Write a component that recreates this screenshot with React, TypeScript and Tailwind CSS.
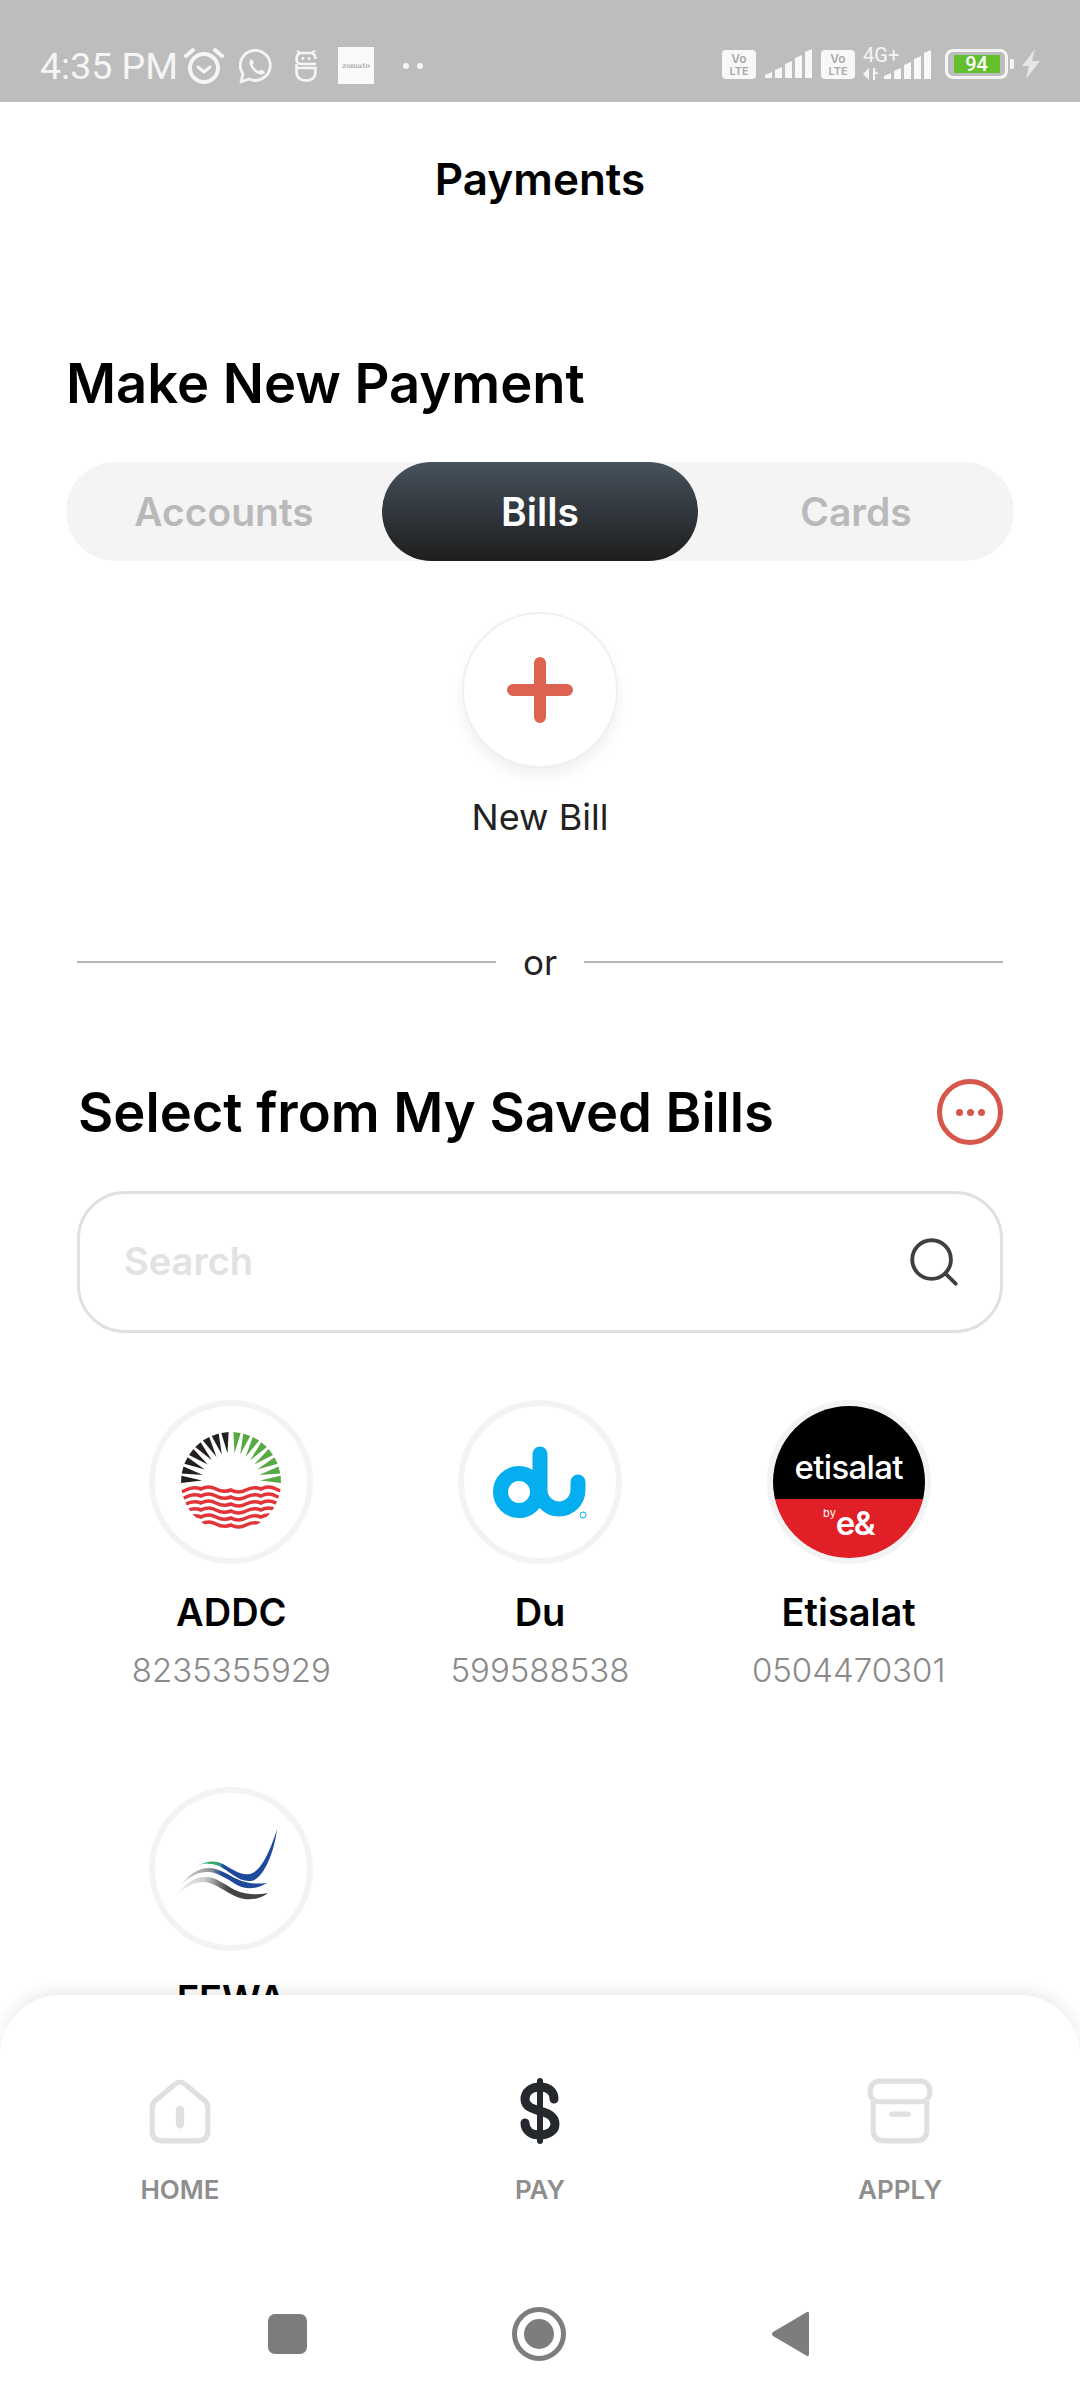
import { Search } from 'lucide-react';

const sans = 'font-["Inter","Liberation_Sans",sans-serif]';

const rayAngles = [3, 14, 25.5, 37, 48.5, 60, 71.5, 83];
const barHeights = [7, 12, 18, 24, 30];

function wedge(deg: number) {
  const pt = (a: number, r: number) => {
    const t = (a * Math.PI) / 180;
    return `${(50 + r * Math.cos(t)).toFixed(1)},${(50 - r * Math.sin(t)).toFixed(1)}`;
  };
  return `${pt(deg, 29)} ${pt(deg - 4.2, 50)} ${pt(deg + 4.2, 50)}`;
}

function AddcLogo() {
  const waves = [58, 65, 72, 79, 86, 93];
  return (
    <svg width="100" height="100" viewBox="0 0 100 100">
      <defs>
        <clipPath id="addc-clip">
          <circle cx="50" cy="50" r="50" />
        </clipPath>
      </defs>
      {rayAngles.map((a) => (
        <polygon key={a} points={wedge(a)} fill="#58a845" />
      ))}
      {rayAngles.map((a) => (
        <polygon key={a} points={wedge(180 - a)} fill="#231f20" />
      ))}
      <g clipPath="url(#addc-clip)" fill="none" stroke="#e2353a" strokeWidth="3.6">
        {waves.map((y) => (
          <path
            key={y}
            d={`M-10 ${y} q7.5 4 15 0 t15 -1 q7.5 -4 15 0 t15 1 q7.5 4 15 0 t15 -1 q7.5 -4 15 0 t15 1`}
          />
        ))}
      </g>
    </svg>
  );
}

function DuLogo() {
  return (
    <svg width="120" height="120" viewBox="0 0 120 120">
      <g fill="none" stroke="#05aeef" strokeWidth="15" strokeLinecap="round">
        <circle cx="39" cy="70" r="18.5" />
        <path d="M60 32 V68 a19 19 0 0 0 38 0 V60" />
      </g>
      <circle cx="103" cy="93" r="3" fill="none" stroke="#05aeef" strokeWidth="1" />
    </svg>
  );
}

function FewaLogo() {
  return (
    <svg width="152" height="152" viewBox="6 6 152 152">
      <defs>
        <linearGradient id="fewa-a" gradientUnits="userSpaceOnUse" x1="48" y1="0" x2="128" y2="0">
          <stop offset="0" stopColor="#d5eedd" />
          <stop offset="0.15" stopColor="#2eb364" />
          <stop offset="0.28" stopColor="#3fa37a" />
          <stop offset="0.33" stopColor="#1f4a9c" />
          <stop offset="1" stopColor="#1f4a9c" />
        </linearGradient>
        <linearGradient id="fewa-b" gradientUnits="userSpaceOnUse" x1="32" y1="0" x2="118" y2="0">
          <stop offset="0" stopColor="#dcdcdc" />
          <stop offset="0.35" stopColor="#8f9295" />
          <stop offset="0.47" stopColor="#1f4a9c" />
          <stop offset="1" stopColor="#1f4a9c" />
        </linearGradient>
        <linearGradient id="fewa-c" gradientUnits="userSpaceOnUse" x1="29" y1="0" x2="120" y2="0">
          <stop offset="0" stopColor="#f0f0f0" />
          <stop offset="0.3" stopColor="#c9cbcd" />
          <stop offset="0.55" stopColor="#444444" />
          <stop offset="1" stopColor="#444444" />
        </linearGradient>
      </defs>
      <path
        d="M128 42 C125 68 113 94 101 94 C90 95 80 84 70 79 C62 76 54 76 48 79 C56 74 66 73 74 77 C83 82 92 89 101 87 C112 85 122 62 128 42 Z"
        fill="url(#fewa-a)"
      />
      <path
        d="M118 96 C108 102 98 103 88 98 C78 92 70 86 60 85 C50 84 40 90 33 97 C40 87 50 81 60 81 C70 81 79 88 88 92 C98 97 108 97 118 96 Z"
        fill="url(#fewa-b)"
      />
      <path
        d="M119 106 C110 113 98 114 88 110 C76 105 68 97 56 95 C46 94 36 100 29 107 C36 96 46 90 56 90 C68 90 76 98 86 103 C97 108 108 108 119 106 Z"
        fill="url(#fewa-c)"
      />
    </svg>
  );
}

function EtisalatLogo() {
  return (
    <div className="flex h-full w-full flex-col overflow-hidden rounded-full">
      <div className="flex h-[93px] items-end justify-center bg-black pb-[14px]">
        <span className={`${sans} text-[33px] leading-[36px] font-medium tracking-[-0.7px] text-white`}>etisalat</span>
      </div>
      <div className="flex flex-1 items-start justify-center bg-[#e01f26]">
        <span className={`${sans} mt-[7px] text-[11px] leading-[14px] text-white`}>by</span>
        <span className={`${sans} mt-[6px] text-[33px] leading-[36px] font-semibold tracking-[-1.5px] text-white`}>e&amp;</span>
      </div>
    </div>
  );
}

function Bill({ name, number, logo }: { name: string; number: string; logo: React.ReactNode }) {
  return (
    <div className="flex flex-col items-center">
      <div className="flex h-[164px] w-[164px] items-center justify-center rounded-full border-[6px] border-[#f3f3f3] bg-white">
        {logo}
      </div>
      <div className={`${sans} mt-[25px] text-[38px] leading-[46px] font-semibold text-black`}>{name}</div>
      <div className={`${sans} mt-[15px] text-[33px] leading-[40px] font-light text-[#8a8a8a]`}>{number}</div>
    </div>
  );
}

function Bars() {
  return (
    <div className="flex h-[30px] items-end gap-[3px]">
      {barHeights.map((h, i) => (
        <svg key={i} width="7" height={h} viewBox={`0 0 7 ${h}`}>
          <path d={`M0 ${h - 1} V${Math.max(h - (i + 1) * 6, 3)} L7 0 V${h - 1} Z`} fill="#f8f8f8" />
        </svg>
      ))}
    </div>
  );
}

function VoLte() {
  return (
    <div className="flex h-[29px] w-[34px] flex-col items-center justify-center rounded-[4px] bg-[#f8f8f8] text-[#a9a9a9]">
      <span className={`${sans} text-[12px] leading-[12px] font-semibold`}>Vo</span>
      <span className={`${sans} text-[11px] leading-[12px] font-semibold`}>LTE</span>
    </div>
  );
}

function StatusBar() {
  return (
    <div className="flex h-[102px] shrink-0 items-start bg-[#bdbdbd] pt-[47px] pl-[40px]">
      <span className='font-["Roboto",sans-serif] text-[37.5px] leading-[38px] text-[#f5f5f5]'>4:35 PM</span>
      {/* alarm */}
      <svg className="ml-[6px]" width="40" height="38" viewBox="0 0 40 38" fill="none" stroke="#f5f5f5" strokeLinecap="round">
        <circle cx="20" cy="21" r="14" strokeWidth="4" />
        <path d="M14 20 L20 25 L26 20" strokeWidth="3" />
        <path d="M2 9 L9 3" strokeWidth="4" />
        <path d="M38 9 L31 3" strokeWidth="4" />
      </svg>
      {/* whatsapp */}
      <svg className="mt-[2px] ml-[15px]" width="34" height="35" viewBox="0 0 34 35" fill="none" stroke="#f5f5f5">
        <path d="M2 33 L4 25 A15 15 0 1 1 10 30 Z" strokeWidth="2.8" strokeLinejoin="round" />
        <path d="M12 10 C9 13 11 18 15 22 C19 26 24 27 26 23 L22 20.5 L20 22 C17 21 14 18 13.5 15.5 L15 13.5 Z" fill="#f5f5f5" stroke="none" />
      </svg>
      {/* mascot */}
      <svg className="mt-[3px] ml-[22px]" width="22" height="32" viewBox="0 0 22 32" fill="none" stroke="#f5f5f5" strokeWidth="2.6">
        <path d="M2 0.5 L5 3 M20 0.5 L17 3" strokeWidth="2" />
        <path d="M21 14 H6 Q1.5 14 1.5 9 Q1.5 3 7 3 H15 Q20.5 3 20.5 9" />
        <path d="M1.5 18 H20.5 V21 Q20.5 30.5 11 30.5 Q1.5 30.5 1.5 21 Z M1.5 14 V18" />
        <circle cx="8" cy="8.5" r="1.4" fill="#f5f5f5" stroke="none" />
        <circle cx="14" cy="8.5" r="1.4" fill="#f5f5f5" stroke="none" />
      </svg>
      <div className="ml-[21px] flex h-[37px] w-[36px] items-center justify-center bg-[#fafafa]">
        <span className='font-["DejaVu_Serif",serif] text-[7px] leading-[8px] font-bold tracking-[-0.2px] text-[#b5b5b5]'>zomato</span>
      </div>
      <div className="mt-[16px] ml-[29px] flex gap-[8px]">
        <div className="h-[6px] w-[6px] rounded-full bg-[#f5f5f5]" />
        <div className="h-[6px] w-[6px] rounded-full bg-[#f5f5f5]" />
      </div>
      <div className="ml-[299px] flex items-start">
        <div className="mt-[3px]"><VoLte /></div>
        <div className="mt-[2px] ml-[9px]"><Bars /></div>
        <div className="mt-[3px] ml-[9px]"><VoLte /></div>
        <div className="relative ml-[8px] h-[34px] w-[68px]">
          <span className='absolute top-0 left-0 font-["Roboto",sans-serif] text-[20px] leading-[16px] text-[#f5f5f5]'>4G+</span>
          <div className="absolute right-0 bottom-[1px]"><Bars /></div>
          <svg className="absolute bottom-0 left-0" width="17" height="13" viewBox="0 0 17 13" fill="#f5f5f5">
            <path d="M0 6 L6 0 V12 Z" />
            <path d="M10 0 H12 V3 L16 6 H12 V12 H10 Z" />
          </svg>
        </div>
        <div className="mt-[2px] ml-[14px] flex h-[30px] w-[63px] items-center justify-center rounded-[8px] border-[3px] border-[#f5f5f5]">
          <div className="flex h-[18px] w-[46px] items-center justify-center bg-[#63bf2b]">
            <span className='font-["Roboto",sans-serif] text-[20px] leading-[18px] font-medium text-white'>94</span>
          </div>
        </div>
        <div className="mt-[12px] ml-[2px] h-[10px] w-[4px] rounded-r-[2px] bg-[#f5f5f5]" />
        <svg className="mt-[2px] ml-[8px]" width="18" height="30" viewBox="0 0 18 30" fill="#e6e6e6">
          <path d="M13 0 L0 17 H7 L4 30 L18 12 H10 Z" />
        </svg>
      </div>
    </div>
  );
}

function NavItem({ label, icon }: { label: string; icon: React.ReactNode }) {
  return (
    <div className="flex w-[160px] flex-col items-center">
      <div className="flex h-[66px] items-center justify-center">{icon}</div>
      <span className={`${sans} mt-[31px] text-[26px] leading-[30px] font-semibold text-[#8e8e8e]`}>{label}</span>
    </div>
  );
}

function BottomSheet() {
  return (
    <div className="absolute right-0 bottom-0 left-0 flex h-[405px] flex-col rounded-t-[60px] bg-white shadow-[0_-6px_14px_rgba(0,0,0,0.07)]">
      <div className="mt-[83px] flex justify-between px-[100px]">
        <NavItem
          label="HOME"
          icon={
            <svg width="66" height="66" viewBox="0 0 64 64" fill="none" stroke="#e0e0e0" strokeWidth="5">
              <path d="M27 6 L8 22 Q5 25 5 30 V51 Q5 61 15 61 H49 Q59 61 59 51 V30 Q59 25 56 22 L37 6 Q32 2 27 6 Z" />
              <path d="M32 31 V45" strokeWidth="8" strokeLinecap="round" />
            </svg>
          }
        />
        <NavItem
          label="PAY"
          icon={
            <svg width="42" height="66" viewBox="0 0 42 64" fill="none" stroke="#25282d" strokeLinecap="round">
              <path d="M21 2 V62" strokeWidth="6" />
              <path d="M35 20 C35 12 29 8 21 8 C12 8 6 13 6 20 C6 28 14 30 21 32 C29 34 36 37 36 45 C36 52 29 56 21 56 C13 56 6 52 6 44" strokeWidth="9" />
            </svg>
          }
        />
        <NavItem
          label="APPLY"
          icon={
            <svg width="66" height="66" viewBox="0 0 64 64" fill="none" stroke="#e0e0e0" strokeWidth="5">
              <rect x="3" y="3" width="58" height="20" rx="9" />
              <path d="M6 23 V50 Q6 61 17 61 H47 Q58 61 58 50 V23" />
              <path d="M24 35 H40" strokeWidth="5" strokeLinecap="round" />
            </svg>
          }
        />
      </div>
      <div className="mt-[102px] flex items-center justify-center pr-[3px]">
        <div className="mr-[205px] h-[40px] w-[39px] rounded-[7px] bg-[#7d7d7d]" />
        <div className="flex h-[54px] w-[54px] items-center justify-center rounded-full border-[5px] border-[#7d7d7d]">
          <div className="h-[30px] w-[30px] rounded-full bg-[#7d7d7d]" />
        </div>
        <svg className="ml-[206px]" width="37" height="46" viewBox="0 0 37 46" fill="#7d7d7d">
          <path d="M35 1 Q37 0 37 3 V43 Q37 46 35 45 L1 25 Q-1 23 1 21 Z" />
        </svg>
      </div>
    </div>
  );
}

export default function App() {
  return (
    <div className={`${sans} relative flex h-[2400px] w-[1080px] flex-col overflow-hidden bg-white`}>
      <StatusBar />
      <div className="flex h-[154px] shrink-0 items-center justify-center">
        <h1 className="text-[44px] leading-[50px] font-semibold text-black">Payments</h1>
      </div>

      <div className="flex flex-col px-[66px]">
        <h2 className="mt-[97px] text-[54.3px] leading-[60px] font-semibold text-black">Make New Payment</h2>
        <div className="mt-[49px] grid h-[99px] grid-cols-3 rounded-full bg-[#f4f4f4]">
          <div className="flex items-center justify-center pt-[2px] text-[39px] font-semibold text-[#b9b9b9]">Accounts</div>
          <div className="flex items-center justify-center rounded-full bg-gradient-to-b from-[#46525e] to-[#1e1e1e] pt-[2px] text-[39px] font-semibold text-white">
            Bills
          </div>
          <div className="flex items-center justify-center pt-[2px] text-[39px] font-semibold text-[#b9b9b9]">Cards</div>
        </div>
      </div>

      <div className="mt-[51px] flex flex-col items-center">
        <div className="flex h-[156px] w-[156px] items-center justify-center rounded-full border-2 border-[#f0f0f0] bg-white shadow-[0_8px_14px_rgba(0,0,0,0.06)]">
          <svg width="66" height="66" viewBox="0 0 66 66" fill="none" stroke="#dc6350" strokeWidth="12" strokeLinecap="round">
            <path d="M33 6 V60 M6 33 H60" />
          </svg>
        </div>
        <span className="mt-[26px] text-[36px] leading-[46px] text-[#222222]">New Bill</span>
      </div>

      <div className="mt-[99px] flex h-[46px] items-center px-[77px]">
        <div className="h-[2px] flex-1 bg-[#b5b5b5]" />
        <span className="w-[88px] text-center text-[35px] leading-[48px] text-[#222222]">or</span>
        <div className="h-[2px] flex-1 bg-[#b5b5b5]" />
      </div>

      <div className="mt-[94px] flex h-[66px] items-center justify-between pr-[77px] pl-[78px]">
        <h2 className="text-[54.3px] leading-[60px] font-semibold text-black">Select from My Saved Bills</h2>
        <div className="flex h-[66px] w-[66px] items-center justify-center gap-[4px] rounded-full border-[5px] border-[#d6574a]">
          <div className="h-[7px] w-[7px] rounded-full bg-[#d6574a]" />
          <div className="h-[7px] w-[7px] rounded-full bg-[#d6574a]" />
          <div className="h-[7px] w-[7px] rounded-full bg-[#d6574a]" />
        </div>
      </div>

      <div className="mx-[77px] mt-[46px] flex h-[142px] items-center justify-between rounded-[48px] border-[3px] border-[#e0e0e0] pr-[37px] pl-[44px]">
        <span className="pb-[2px] text-[38px] font-semibold text-[#e2e2e2]">Search</span>
        <Search size={58} strokeWidth={1.6} color="#3f3f3f" />
      </div>

      <div className="mt-[67px] grid grid-cols-3 gap-y-[97px] px-[77px]">
        <Bill name="ADDC" number="8235355929" logo={<AddcLogo />} />
        <Bill name="Du" number="599588538" logo={<DuLogo />} />
        <Bill name="Etisalat" number="0504470301" logo={<EtisalatLogo />} />
        <Bill name="FEWA" number="" logo={<FewaLogo />} />
      </div>

      <BottomSheet />
    </div>
  );
}
